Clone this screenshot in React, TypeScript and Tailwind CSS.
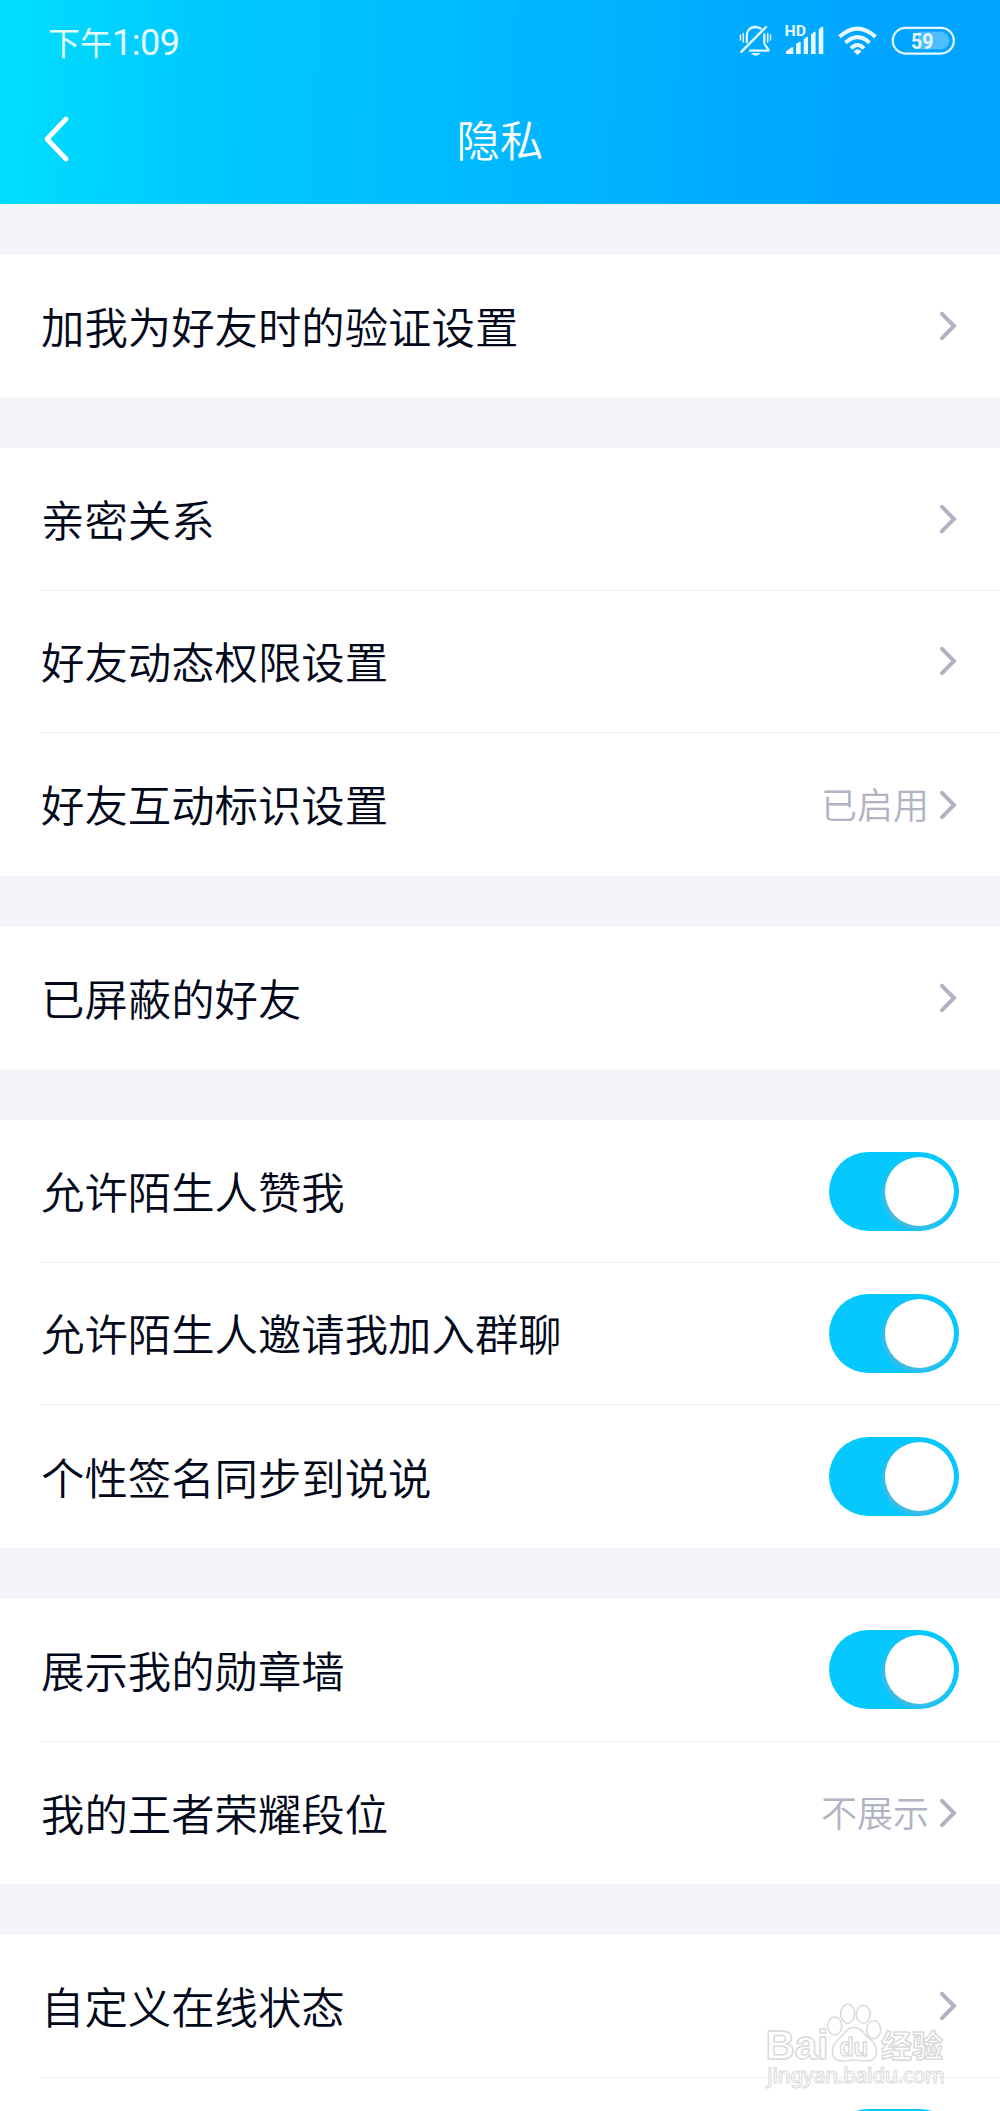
import React from "react";

type Item = { label: string; value?: string; toggle?: boolean };

const sections: Item[][] = [
  [{ label: "加我为好友时的验证设置" }],
  [
    { label: "亲密关系" },
    { label: "好友动态权限设置" },
    { label: "好友互动标识设置", value: "已启用" },
  ],
  [{ label: "已屏蔽的好友" }],
  [
    { label: "允许陌生人赞我", toggle: true },
    { label: "允许陌生人邀请我加入群聊", toggle: true },
    { label: "个性签名同步到说说", toggle: true },
  ],
  [
    { label: "展示我的勋章墙", toggle: true },
    { label: "我的王者荣耀段位", value: "不展示" },
  ],
  [{ label: "自定义在线状态" }, { label: "", toggle: true }],
];

function Chevron() {
  return (
    <svg className="h-8 w-5 shrink-0" viewBox="0 0 20 32" fill="none" stroke="#b1b3c4" strokeWidth="4" strokeLinecap="round" strokeLinejoin="miter">
      <path d="M3 3.800 L15 16 L3 28.200" />
    </svg>
  );
}

function Toggle() {
  return (
    <div className="flex h-[79px] w-[130px] items-center justify-end rounded-full bg-[#05c8ff] pr-[5px]">
      <div className="size-[69px] rounded-full bg-white shadow-[-2px_3px_5px_rgba(150,170,180,0.55)]" />
    </div>
  );
}

function Row({ item, last }: { item: Item; last: boolean }) {
  return (
    <div className="h-[142.6px] pl-10">
      <div className={`flex h-full items-center justify-between ${last ? "" : "border-b border-[#ededf6]"}`}>
        <span className="pb-px pl-[1px] text-[43.4px] leading-none">{item.label}</span>
        {item.toggle ? (
          <div className="pr-[41px]">
            <Toggle />
          </div>
        ) : (
          <div className="flex items-center gap-[10px] pr-[41px]">
            {item.value && <span className="pb-[3px] text-[36px] leading-none text-[#b1b3c4]">{item.value}</span>}
            <Chevron />
          </div>
        )}
      </div>
    </div>
  );
}

function StatusIcons() {
  return (
    <svg className="h-[40px] w-[220px]" viewBox="738 20 220 40" fill="none" stroke="#e6f7ff" strokeLinecap="round" strokeLinejoin="round">
      <g strokeWidth="2.300">
        <path d="M746.800 42 V36 C746.800 30.500 750 27 755.500 27 C757.500 27 759 27.500 760.500 28.500" />
        <path d="M764.300 34.500 V43 C764.300 46 768.500 47.500 768.500 50.700 H750" />
        <path d="M741.300 51.800 L766 27" strokeWidth="2.400" />
        <path d="M740.500 35 V40 M743.300 33.500 V42 M767.700 33.500 V42 M770.500 35 V40" strokeWidth="1.500" />
      </g>
      <path d="M751 53 H760.500 Q755.500 58.500 751 53Z" fill="#e6f7ff" stroke="none" />
      <text x="784.500" y="36" fill="#e6f7ff" stroke="none" className="font-['Roboto'] text-[14.5px] font-bold" textLength="21.500" lengthAdjust="spacingAndGlyphs">HD</text>
      <path d="M786 54 V51.500 L791.500 47.300 H793.300 V54Z M796 54 V44 L799.500 41.700 H800.700 V54Z M803.700 54 V39.500 L806.500 36.700 H808 V54Z M811 54 V34.500 L814 31.700 H815.600 V54Z M818.700 54 V29.500 L821.500 26.700 H823.300 V54Z" fill="#e6f7ff" stroke="none" />
      <g strokeWidth="4" strokeLinecap="butt">
        <path d="M839.500 36.800 Q857.500 20.500 875.500 36.800" />
        <path d="M845.500 42.800 Q857.500 31.500 869.500 42.800" />
        <path d="M851 48.500 Q857.500 41.500 864 48.500" />
      </g>
      <path d="M853.500 51.500 Q857.500 47 861.500 51.500 L857.500 55Z" fill="#e6f7ff" stroke="none" />
      <path d="M918 31.700 H940.500 A8.700 8.700 0 0 1 940.500 49.200 H918Z" fill="#4fbdff" stroke="none" />
      <rect x="892.800" y="27.800" width="61" height="25.800" rx="12.900" strokeWidth="2.200" />
      <text x="911" y="48.800" fill="#e6f7ff" stroke="none" className="font-['Roboto'] text-[21.5px] font-bold" textLength="22.500" lengthAdjust="spacingAndGlyphs">59</text>
    </svg>
  );
}

function Watermark() {
  return (
    <svg className="absolute bottom-0 right-[45px] h-[111px] w-[190px]" viewBox="765 2000 190 111" fill="#ffffff" stroke="#dadada" strokeWidth="1.500" strokeLinejoin="round">
      <text x="765.500" y="2059" className="font-['Liberation_Sans'] text-[41px] font-bold" textLength="63" lengthAdjust="spacingAndGlyphs">Bai</text>
      <ellipse cx="834.700" cy="2026" rx="7" ry="9" />
      <ellipse cx="847.700" cy="2013.700" rx="7" ry="9.500" />
      <ellipse cx="863.300" cy="2014.300" rx="7" ry="9" />
      <ellipse cx="873.700" cy="2029.700" rx="7" ry="9" />
      <path d="M854 2027.500 C846 2027.500 844 2035 838 2040 C831 2046 831 2056 836 2059.500 C842 2063 848 2060 854 2060 C860 2060 867 2063 873 2059.500 C878 2056 878 2046 871 2040 C864 2035 862 2027.500 854 2027.500Z" />
      <text x="839.500" y="2056" className="font-['Liberation_Sans'] text-[25px] font-bold" textLength="28.500" lengthAdjust="spacingAndGlyphs">du</text>
      <text x="881" y="2057" className="font-['Noto_Sans_CJK_SC'] text-[31px] font-bold" textLength="62">经验</text>
      <text x="767" y="2083" strokeWidth="1" className="font-['Noto_Sans'] text-[21px] font-medium" textLength="178">jingyan.baidu.com</text>
    </svg>
  );
}

export default function App() {
  return (
    <div className="relative h-[2111px] w-[1000px] overflow-hidden bg-[#f4f5fa] font-['Noto_Sans_CJK_SC',sans-serif] font-[350] text-[#03081a]">
      <header className="h-[203.6px] bg-[linear-gradient(92deg,#00deff_0%,#00c9ff_20%,#00b8ff_50%,#00a5ff_85%,#00a4ff_100%)] text-white">
        <div className="flex h-[80px] items-center justify-between pl-[48px] pr-[42px]">
          <span className="flex items-center pt-[2px] text-[32px] font-normal leading-none text-[#e6fbff]">
            下午
            <span className="pt-[4px] font-['Roboto'] text-[36px] font-normal tracking-[-0.5px]">1:09</span>
          </span>
          <StatusIcons />
        </div>
        <div className="grid h-[118px] grid-cols-3 items-center">
          <svg className="ml-[40px] h-[50px] w-8" viewBox="0 0 32 50" fill="none" stroke="white" strokeWidth="4.800" strokeLinecap="round" strokeLinejoin="round">
            <path d="M26 5 L7 25 L26 45" />
          </svg>
          <h1 className="text-center text-[43.4px] leading-none">隐私</h1>
        </div>
      </header>
      <main>
        {sections.map((items, i) => (
          <section key={i} className="mt-[50.93px] bg-white">
            {items.map((item, j) => (
              <Row key={j} item={item} last={j === items.length - 1} />
            ))}
          </section>
        ))}
      </main>
      <Watermark />
    </div>
  );
}
